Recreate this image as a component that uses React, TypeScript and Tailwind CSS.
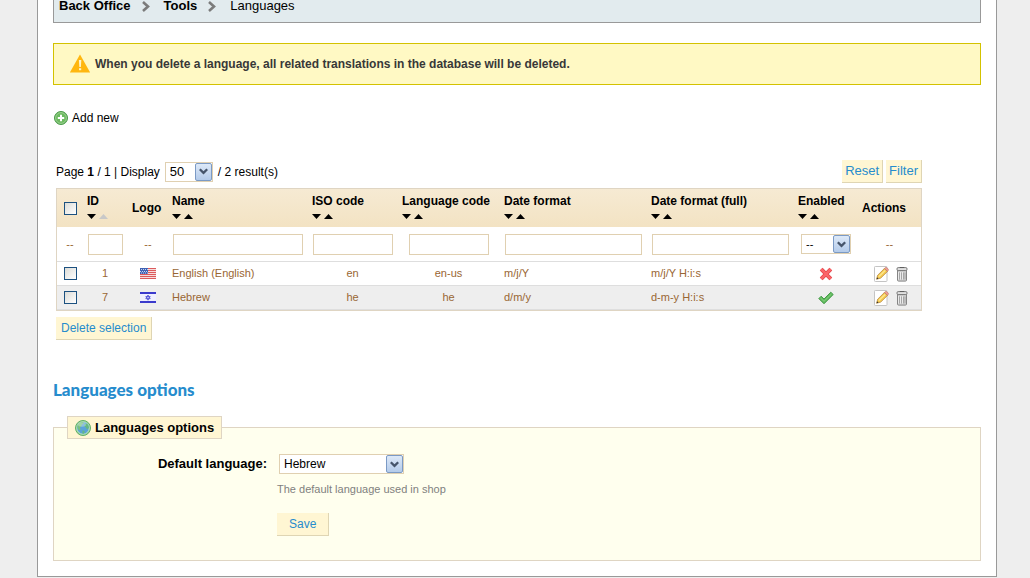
import React, { useState } from 'react';

interface Language {
  id: number;
  name: string;
  iso: string;
  code: string;
  dateFormat: string;
  dateFormatFull: string;
  enabled: boolean;
}

const LANGUAGES: Language[] = [
  { id: 1, name: 'English (English)', iso: 'en', code: 'en-us', dateFormat: 'm/j/Y', dateFormatFull: 'm/j/Y H:i:s', enabled: false },
  { id: 7, name: 'Hebrew', iso: 'he', code: 'he', dateFormat: 'd/m/y', dateFormatFull: 'd-m-y H:i:s', enabled: true },
];

const BUTTON = 'h-[23px] cursor-pointer border-r border-b border-[#dfd5b3] bg-[#fff6d3] text-[#268ccd]';
const FILTER_INPUT = 'block h-[21px] border border-[#e0d0b1] bg-white px-1 text-[11px] text-black';

const Chevron = () => (
  <svg className="h-3 w-2" viewBox="0 0 8 12" fill="none" aria-hidden="true">
    <path d="M1 2l5 4.500-5 4.500" stroke="#7b7b7b" strokeWidth="2.6" />
  </svg>
);

const WarningIcon = () => (
  <svg className="h-5 w-5 shrink-0" viewBox="0 0 20 20" aria-hidden="true">
    <path d="M10 .6L20.200 18.500H-.2z" fill="#ffb70f" />
    <path d="M8.900 6h2.400l-.4 7H9.300z" fill="#fff3c8" />
    <rect x="9" y="14.200" width="2.200" height="2" fill="#fff3c8" />
  </svg>
);

const AddIcon = () => (
  <svg className="h-[14px] w-[14px]" viewBox="0 0 14 14" aria-hidden="true">
    <circle cx="7" cy="7" r="6.5" fill="#5fae56" stroke="#4a9a48" />
    <circle cx="7" cy="7" r="5.4" fill="#6cba60" stroke="#a9d89f" strokeWidth=".8" />
    <path d="M7 3.8v6.4M3.8 7h6.4" stroke="#fff" strokeWidth="2" />
  </svg>
);

const GlobeIcon = () => (
  <svg className="h-4 w-4" viewBox="0 0 16 16" aria-hidden="true">
    <circle cx="8" cy="8" r="7.5" fill="#8fcf92" stroke="#5fae68" />
    <circle cx="8" cy="8" r="6.2" fill="#5aa3d8" stroke="#c4e8c0" strokeWidth=".8" />
    <path d="M2.4 6C3.3 3.6 5.4 2.2 8 2.1l.8 1.6-2 .9-.4 2-1.6.7.8 2.1-1.4.8C2.900 9 2.200 7.500 2.400 6z" fill="#79c17c" />
    <path d="M9.300 4.300l2.600-.6c1.300 1 2 2.500 2 4.200l-2 1.500-.9-2-1.600-.8zM7.500 10.200l2.300.8-.8 2.700-1.700-.2z" fill="#65b883" />
    <ellipse cx="7" cy="4.500" rx="4" ry="2.200" fill="#fff" opacity=".3" />
  </svg>
);

const UsFlag = () => (
  <svg className="h-[11px] w-4" viewBox="0 0 16 11" role="img" aria-label="English">
    <rect width="16" height="11" fill="#f6dcdc" />
    <path d="M0 .5h16M0 2.500h16M0 4.500h16M0 6.500h16M0 8.500h16M0 10.500h16" stroke="#dc5a5c" />
    <rect width="8" height="6" fill="#3f62b4" />
    <path d="M1 1.500h7M0 3.500h7M1 5h7" stroke="#c5d3f2" strokeDasharray="1 1" />
  </svg>
);

const IsraelFlag = () => (
  <svg className="h-[11px] w-4" viewBox="0 0 16 11" role="img" aria-label="Hebrew">
    <rect width="16" height="11" fill="#eeefff" />
    <path d="M0 1h16M0 10h16" stroke="#3a3acc" strokeWidth="2" />
    <path d="M8 3l2.200 3.700H5.800zM8 8.200L5.800 4.500h4.400z" fill="#b4b4f0" stroke="#5a5ad8" strokeWidth=".9" />
  </svg>
);

const CrossIcon = () => (
  <svg className="h-[14px] w-[14px]" viewBox="0 0 14 14" role="img" aria-label="Disabled">
    <path d="M2.200 2.200l9.600 9.600M11.800 2.200l-9.600 9.600" stroke="#e04448" strokeWidth="4" />
    <path d="M2.200 2.200l9.600 9.600M11.800 2.200l-9.600 9.600" stroke="#fb6468" strokeWidth="2.600" />
  </svg>
);

const CheckIcon = () => (
  <svg className="h-[14px] w-4" viewBox="0 0 16 14" role="img" aria-label="Enabled">
    <path d="M.8 7.600L3.200 5.200 6 8 12.800 1.200l2.400 2.300L6 12.800z" fill="#5cb85a" stroke="#3c9440" strokeWidth=".9" />
    <path d="M2.500 7L6 10.300 13.500 3" fill="none" stroke="#8ed286" strokeWidth=".9" />
  </svg>
);

const EditIcon = () => (
  <svg className="h-4 w-4" viewBox="0 0 16 16" aria-hidden="true">
    <rect x="1.500" y=".5" width="12.500" height="15" rx=".8" fill="#fff" stroke="#c4c4c4" />
    <path d="M3.600 13.200l1.100-4L11.400 2.500l3 3-6.700 6.600z" fill="#f6cb4f" stroke="#b8863a" strokeWidth=".8" />
    <path d="M5.800 10.700l6.500-6.400" stroke="#fdeb9b" strokeWidth="1.100" />
    <path d="M11.400 2.500l1-.9q.7-.5 1.400.1l1.400 1.400q.6.700 0 1.400l-.8 1z" fill="#ee9c92" stroke="#b06a5c" strokeWidth=".5" />
    <path d="M3.600 13.200l.5-1.900 1.400 1.400z" fill="#333" />
  </svg>
);

const TrashIcon = () => (
  <svg className="h-4 w-4" viewBox="0 0 16 16" aria-hidden="true">
    <path d="M3.500 4h9v10.200q-.1.900-1 .9h-7q-.9 0-1-.9z" fill="#d2d2d2" stroke="#858585" />
    <rect x="3" y="1.600" width="10" height="3" rx="1.200" fill="#e0e0e0" stroke="#757575" />
    <path d="M6 1.500h4" stroke="#5f5f5f" />
    <path d="M5.500 6.500v7M7.500 6.500v7M9.500 6.500v7M11 6.500v7" stroke="#9a9a9a" strokeWidth=".8" />
    <path d="M4.500 6v7.500M6.500 6v7.500M8.500 6v7.500" stroke="#f0f0f0" strokeWidth=".8" />
  </svg>
);

const SortArrows = ({ label, ascActive = false }: { label: string; ascActive?: boolean }) => (
  <span className="flex h-[14px] items-center gap-[3px]">
    <button type="button" aria-label={`Sort ${label} descending`}>
      <svg className="block h-[5px] w-[9px]" viewBox="0 0 9 5">
        <path d="M0 0h9L4.500 5z" fill="#000" />
      </svg>
    </button>
    <button type="button" aria-label={`Sort ${label} ascending`}>
      <svg className="block h-[5px] w-[9px]" viewBox="0 0 9 5">
        <path d="M0 5h9L4.500 0z" fill={ascActive ? '#c8c8c8' : '#000'} />
      </svg>
    </button>
  </span>
);

interface DropDownProps extends React.SelectHTMLAttributes<HTMLSelectElement> {
  wrapperClass: string;
}

const DropDown = ({ wrapperClass, children, ...rest }: DropDownProps) => (
  <span className={`relative block h-5 ${wrapperClass}`}>
    <select {...rest} className="block h-full w-full appearance-none border border-[#e0d0b1] bg-white pr-5 pl-1 text-black">
      {children}
    </select>
    <span className="pointer-events-none absolute top-px right-px bottom-px flex w-[17px] items-center justify-center rounded-xs border border-[#7b9ac5] bg-gradient-to-b from-[#dde9f8] to-[#b4cbea]">
      <svg className="h-[7px] w-[9px]" viewBox="0 0 9 7" fill="none" aria-hidden="true">
        <path d="M.8 1.200l3.700 3.700 3.700-3.700" stroke="#46556b" strokeWidth="2.300" />
      </svg>
    </span>
  </span>
);

const CheckBox = (props: React.InputHTMLAttributes<HTMLInputElement>) => (
  <input
    type="checkbox"
    {...props}
    className="mx-auto block h-[13px] w-[13px] appearance-none border border-[#1c5180] bg-gradient-to-br from-[#dcdcd7] to-white checked:from-[#21a121] checked:to-[#7fd07f]"
  />
);

const SORTABLE = ['Name', 'ISO code', 'Language code', 'Date format', 'Date format (full)', 'Enabled'];

export default function App() {
  const [selected, setSelected] = useState<number[]>([]);
  const [defaultLanguage, setDefaultLanguage] = useState('he');

  const toggle = (id: number) => {
    setSelected(prev => (prev.includes(id) ? prev.filter(x => x !== id) : [...prev, id]));
  };

  const toggleAll = () => {
    setSelected(prev => (prev.length === LANGUAGES.length ? [] : LANGUAGES.map(l => l.id)));
  };

  return (
    <div className="min-h-screen bg-[#eeeeee] pr-[33px] pl-[37px] font-['Liberation_Sans',Arial,sans-serif] text-xs text-black">
      <main className="border-x border-b border-[#999999] bg-white px-[15px] pb-[15px]">
        <nav className="flex items-center border-x border-b border-[#999999] bg-[#e2ebee] px-[5px] pb-[10px] text-[13px] leading-3">
          <a href="#home" className="font-bold">Back Office</a>
          <span className="mr-[14px] ml-[11px]"><Chevron /></span>
          <a href="#tools" className="font-bold">Tools</a>
          <span className="mr-[14px] ml-[11px]"><Chevron /></span>
          <span>Languages</span>
        </nav>

        <div className="mt-5 flex items-center gap-[5px] border border-[#d3c200] bg-[#fff9c4] px-4 py-[10px] leading-5 font-bold text-[#383838]">
          <WarningIcon />
          <p>When you delete a language, all related translations in the database will be deleted.</p>
        </div>

        <a href="#add" className="mt-[25px] flex h-4 w-fit items-center gap-1 pl-px">
          <AddIcon />
          <span>Add new</span>
        </a>

        <form className="mt-[34px] ml-[3px] max-w-[866px]" onSubmit={e => e.preventDefault()}>
          <div className="flex items-center justify-between">
            <div className="flex items-center gap-[5px]">
              <label htmlFor="pagination">Page <b>1</b> / 1 | Display</label>
              <DropDown id="pagination" wrapperClass="w-12 text-[13px]" defaultValue="50">
                <option>20</option>
                <option>50</option>
                <option>100</option>
              </DropDown>
              <span>/ 2 result(s)</span>
            </div>
            <div className="flex gap-[3px]">
              <button type="reset" className={`${BUTTON} px-[3px] text-[13px]`}>Reset</button>
              <button type="submit" className={`${BUTTON} px-[3px] text-[13px]`}>Filter</button>
            </div>
          </div>

          <table className="mt-[5px] w-full table-fixed border-separate border-spacing-0 border border-[#dfd5c3]">
            <colgroup>
              <col className="w-[26px]" />
              <col className="w-[45px]" />
              <col className="w-[40px]" />
              <col className="w-[140px]" />
              <col className="w-[90px]" />
              <col className="w-[102px]" />
              <col className="w-[147px]" />
              <col className="w-[147px]" />
              <col className="w-[64px]" />
              <col />
            </colgroup>
            <thead>
              <tr className="h-[38px] bg-gradient-to-b from-[#f6ead3] to-[#f3e3c3] text-left leading-4">
                <th className="p-0">
                  <CheckBox aria-label="Select all" checked={selected.length === LANGUAGES.length} onChange={toggleAll} />
                </th>
                <th className="px-1 py-0">ID<SortArrows label="ID" ascActive /></th>
                <th className="px-1 py-0">Logo</th>
                {SORTABLE.map(label => (
                  <th key={label} className="px-1 py-0 whitespace-nowrap">
                    {label}
                    <SortArrows label={label} />
                  </th>
                ))}
                <th className="px-1 py-0">Actions</th>
              </tr>
            </thead>
            <tbody className="text-[11px] text-[#996633] [&_td]:border-b [&_td]:border-[#dedede] [&_td]:py-0 [&_td]:pr-[5px] [&_td]:pl-1">
              <tr className="h-[35px] text-center [&_td]:pl-[5px]!">
                <td>--</td>
                <td><input aria-label="Filter ID" className={`${FILTER_INPUT} w-full`} /></td>
                <td>--</td>
                <td><input aria-label="Filter name" className={`${FILTER_INPUT} w-full`} /></td>
                <td><input aria-label="Filter ISO code" className={`${FILTER_INPUT} w-full`} /></td>
                <td><input aria-label="Filter language code" className={`${FILTER_INPUT} mx-auto w-20`} /></td>
                <td><input aria-label="Filter date format" className={`${FILTER_INPUT} w-full`} /></td>
                <td><input aria-label="Filter full date format" className={`${FILTER_INPUT} w-full`} /></td>
                <td>
                  <DropDown aria-label="Filter enabled" wrapperClass="mx-auto w-[50px]" defaultValue="--">
                    <option>--</option>
                    <option>Yes</option>
                    <option>No</option>
                  </DropDown>
                </td>
                <td>--</td>
              </tr>
              {LANGUAGES.map(lang => (
                <tr key={lang.id} className="h-6 even:bg-white odd:bg-[#eeeeee]">
                  <td className="pl-[5px]!">
                    <CheckBox aria-label={`Select ${lang.name}`} checked={selected.includes(lang.id)} onChange={() => toggle(lang.id)} />
                  </td>
                  <td className="text-center">{lang.id}</td>
                  <td>
                    <span className="flex justify-center">{lang.iso === 'en' ? <UsFlag /> : <IsraelFlag />}</span>
                  </td>
                  <td>{lang.name}</td>
                  <td className="text-center">{lang.iso}</td>
                  <td className="text-center">{lang.code}</td>
                  <td>{lang.dateFormat}</td>
                  <td>{lang.dateFormatFull}</td>
                  <td>
                    <button type="button" className="mx-auto block">{lang.enabled ? <CheckIcon /> : <CrossIcon />}</button>
                  </td>
                  <td>
                    <span className="flex justify-end gap-[5px] pr-[6px]">
                      <a href="#edit" aria-label={`Edit ${lang.name}`}><EditIcon /></a>
                      <a href="#delete" aria-label={`Delete ${lang.name}`}><TrashIcon /></a>
                    </span>
                  </td>
                </tr>
              ))}
            </tbody>
          </table>

          <button type="button" className={`${BUTTON} mt-[6px] block px-[5px]`}>Delete selection</button>
        </form>

        <h2 className="mt-[38px] font-['Lato',sans-serif] text-[17px] leading-6 font-black text-[#268ccd]">Languages options</h2>

        <form className="mt-[14px]" onSubmit={e => e.preventDefault()}>
          <fieldset className="border border-[#dfd5c3] bg-[#ffffee] pt-[15px] pb-6">
            <legend className="ml-[13px] flex h-[23px] items-center gap-1 border border-[#dfd5c3] bg-[#fff6d3] px-[7px] text-[13px] font-bold">
              <GlobeIcon />
              Languages options
            </legend>
            <div className="flex gap-[10px]">
              <label htmlFor="default-language" className="w-[213px] text-right text-[13px] leading-5 font-bold">Default language:</label>
              <div>
                <DropDown
                  id="default-language"
                  wrapperClass="ml-[2px] w-[125px]"
                  value={defaultLanguage}
                  onChange={e => setDefaultLanguage(e.target.value)}
                >
                  <option value="en">English (English)</option>
                  <option value="he">Hebrew</option>
                </DropDown>
                <p className="mt-2 text-[11px] leading-[14px] text-[#7f7f7f]">The default language used in shop</p>
                <button type="submit" className={`${BUTTON} mt-[17px] block px-3`}>Save</button>
              </div>
            </div>
          </fieldset>
        </form>
      </main>
    </div>
  );
}
